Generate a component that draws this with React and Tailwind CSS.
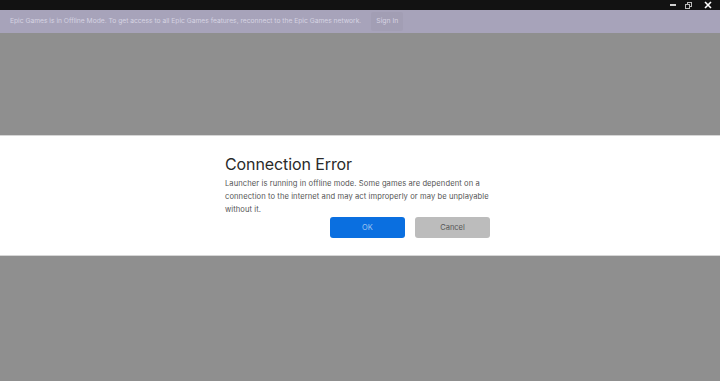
import { useState } from 'react';

function TitleBar() {
  return (
    <div className="h-[10px] bg-[#121212] flex items-center justify-end pr-[8px] gap-[9px]">
      <span className="w-[6px] h-[1.5px] bg-[#cfcfcf]" />
      <span className="relative w-[7px] h-[7px]">
        <span className="absolute right-0 top-0 w-[5px] h-[5px] border border-[#bbbbbb]" />
        <span className="absolute left-0 bottom-0 w-[5px] h-[5px] border border-[#bbbbbb] bg-[#121212]" />
      </span>
      <svg width="8" height="8" viewBox="0 0 8 8" className="ml-[3px]">
        <path d="M1 1 L7 7 M7 1 L1 7" stroke="#ffffff" strokeWidth="1.6" />
      </svg>
    </div>
  );
}

function OfflineBanner() {
  return (
    <div className="h-[23px] bg-[#a7a3ba] flex items-center pl-[10px] gap-[10px]">
      <p className="text-[6.7px] text-[#d6d3e2] whitespace-nowrap">
        Epic Games is in Offline Mode. To get access to all Epic Games features, reconnect to the Epic Games network.
      </p>
      <button className="h-[19px] px-[5px] rounded-[2px] bg-[#a29eb4] text-[6.8px] text-[#d6d3e2]">
        Sign In
      </button>
    </div>
  );
}

export default function App() {
  const [open, setOpen] = useState(true);

  return (
    <div className="w-[720px] h-[381px] bg-[#8f8f8f] flex flex-col overflow-hidden font-['Inter','Liberation_Sans',sans-serif]">
      <TitleBar />
      <OfflineBanner />
      <div className="h-[102px]" />
      {open && (
        <div className="h-[121px] bg-white border-y border-[#d6d6d6] pl-[225px]">
          <div className="w-[275px] pt-[18px]">
            <h2 className="text-[16px] leading-[20px] text-[#2a2a2a] tracking-[-0.1px]">Connection Error</h2>
            <p className="mt-[3px] text-[7.6px] leading-[13px] tracking-[0.08px] text-[#555555]">
              Launcher is running in offline mode. Some games are dependent on a connection to the internet and may act improperly or may be unplayable without it.
            </p>
            <div className="w-[265px] flex justify-end gap-[10px] mt-[1px]">
              <button
                onClick={() => setOpen(false)}
                className="w-[75px] h-[21px] rounded-[3px] bg-[#0a6fe0] text-[7.5px] text-[#9cc4f0]"
              >
                OK
              </button>
              <button
                onClick={() => setOpen(false)}
                className="w-[75px] h-[21px] rounded-[3px] bg-[#bcbcbc] text-[7.5px] text-[#555555]"
              >
                Cancel
              </button>
            </div>
          </div>
        </div>
      )}
    </div>
  );
}
